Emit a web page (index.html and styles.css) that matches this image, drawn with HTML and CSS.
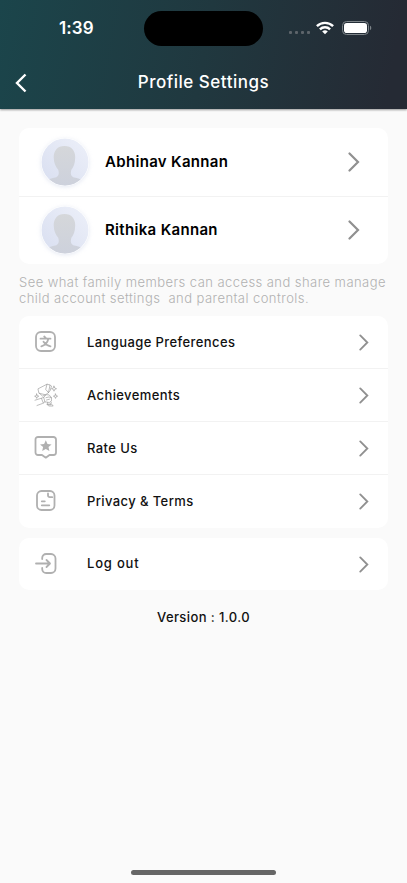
FILE: index.html
```html
<!DOCTYPE html>
<html lang="en">
<head>
    <meta charset="UTF-8">
    <meta name="viewport" content="width=device-width, initial-scale=1.0">
    <title>Profile Settings</title>
    <link rel="stylesheet" href="styles.css">
</head>
<body>
    <svg width="0" height="0" class="defs">
        <defs>
            <linearGradient id="avatar-bg" x1="1" y1="0" x2="0" y2="1">
                <stop offset="0" stop-color="#edf0f9"/>
                <stop offset="1" stop-color="#d8def0"/>
            </linearGradient>
            <linearGradient id="avatar-fg" x1="0" y1="0" x2="0" y2="1">
                <stop offset="0" stop-color="#d5d7da"/>
                <stop offset="1" stop-color="#cdd1dc"/>
            </linearGradient>
            <clipPath id="avatar-clip"><circle cx="24" cy="24" r="23.5"/></clipPath>
        </defs>
        <symbol id="avatar" viewBox="0 0 48 48">
            <g clip-path="url(#avatar-clip)">
                <rect width="48" height="48" fill="url(#avatar-bg)"/>
                <path d="M23.500 8c-7 0-11 4.800-10.800 11.500.1 5.600 2.200 9.600 4.500 12.200 1.300 4.300.3 7-2.900 7.800-3.300.8-6.500 1.600-8.500 3V48h36v-5.500c-2-1.400-5.200-2.200-8.500-3-3.200-.8-4.200-3.500-2.900-7.800 2.300-2.600 3.700-6.600 3.800-12.200C34.400 12.800 30.500 8 23.500 8z" fill="url(#avatar-fg)"/>
            </g>
        </symbol>
        <symbol id="chevron" viewBox="0 0 12 20">
            <path d="M1.500 1.500 10 10l-8.500 8.500" fill="none" stroke="currentColor" stroke-width="2.200" stroke-linecap="round"/>
        </symbol>
    </svg>

    <header class="header">
        <div class="status-bar">
            <span class="time">1:39</span>
            <div class="island"></div>
            <div class="status-icons">
                <div class="dots"><i></i><i></i><i></i><i></i></div>
                <svg class="wifi" viewBox="0 0 18 14" fill="none" stroke="#fff" stroke-width="2.400">
                    <path d="M.9 5.200a11.600 11.600 0 0 1 16.200 0"/>
                    <path d="M3.900 8.300a7.300 7.300 0 0 1 10.200 0"/>
                    <path d="M9 13.300 6.200 10.500a4 4 0 0 1 5.600 0z" fill="#fff" stroke="none"/>
                </svg>
                <svg class="battery" viewBox="0 0 30 14">
                    <rect x=".5" y=".5" width="26" height="13" rx="4" fill="none" stroke="#7d8489"/>
                    <rect x="2" y="2" width="23" height="10" rx="2.800" fill="#fff"/>
                    <path d="M28 4.800c1.700.6 1.700 3.800 0 4.400z" fill="#7d8489"/>
                </svg>
            </div>
        </div>
        <div class="title-bar">
            <svg class="back" viewBox="0 0 12 20"><path d="M10.500 1.500 2 10l8.500 8.500" fill="none" stroke="#fff" stroke-width="2.400"/></svg>
            <h1>Profile Settings</h1>
        </div>
    </header>

    <main class="content">
        <div class="card members">
            <div class="member">
                <svg class="avatar"><use href="#avatar"/></svg>
                <span class="name">Abhinav Kannan</span>
                <svg class="chevron"><use href="#chevron"/></svg>
            </div>
            <div class="member">
                <svg class="avatar"><use href="#avatar"/></svg>
                <span class="name">Rithika Kannan</span>
                <svg class="chevron"><use href="#chevron"/></svg>
            </div>
        </div>

        <p class="hint">See what family members can access and share manage<br>child account settings&nbsp; and parental controls.</p>

        <div class="card">
            <div class="item">
                <svg class="icon" viewBox="0 0 24 24">
                    <rect x="2" y="2" width="19" height="19" rx="5"/>
                    <path d="M6.500 8.700h10M10.200 6.500l2 1.800M14.300 9c-.8 3.500-3.300 6.300-7 7.300M9.500 11.800c1.700 2.400 4 4 7 4.500"/>
                </svg>
                <span class="label">Language Preferences</span>
                <svg class="chevron"><use href="#chevron"/></svg>
            </div>
            <div class="item">
                <svg class="icon fine" viewBox="0 0 24 24">
                    <path d="M4.300 5.700 13 1.200l3 .8-1.500 7.600-3 2.200-6.200-1.500zM13 1.200l-1.300 5.200 2.800 3.200M16 2l1.500 1-1.300 4.500-1.700 2.100M5.300 10.300l3.300 2.800 3-1.300"/>
                    <path d="M1 17.200l8.700-2.700 2.100-2.800 3.300.2 2.200 2.400.2 3.500-2.200 1.700-4.400-.7-2.200 1.600L3 22.500M9.700 14.500l1.300 4.500M12 14.700l3-.8 2.500 1M12.500 17l3-.8"/>
                    <path d="M7.500 15.500l1.800 4.500M13.500 19.500l-.3 2 3.300.4.800-2.700M13.200 21.500l1.500 1.500h4.500l-1.500-1.700z"/>
                    <path d="m20 3.200.7 1.800 1.800.7-1.800.7-.7 1.800-.7-1.800-1.800-.7 1.800-.7zM21.500 11l.6 1.600 1.500.6-1.500.6-.6 1.600-.6-1.600-1.500-.6 1.500-.6zM2.700 11l.6 1.600 1.500.6-1.500.6-.6 1.600-.6-1.600-1.500-.6 1.500-.6z"/>
                </svg>
                <span class="label">Achievements</span>
                <svg class="chevron"><use href="#chevron"/></svg>
            </div>
            <div class="item">
                <svg class="icon" viewBox="0 0 24 24">
                    <path d="M4 1h15.500a2.500 2.500 0 0 1 2.500 2.500v13a2.500 2.500 0 0 1-2.500 2.500h-4l-3.700 2.700L8 19H4a2.500 2.500 0 0 1-2.500-2.500v-13A2.500 2.500 0 0 1 4 1z"/>
                    <path class="solid" d="m11.800 4.200 1.700 3.800 4.100.4-3.100 2.700.9 4-3.600-2.100-3.600 2.100.9-4L6 8.400l4.100-.4z"/>
                </svg>
                <span class="label">Rate Us</span>
                <svg class="chevron"><use href="#chevron"/></svg>
            </div>
            <div class="item">
                <svg class="icon" viewBox="0 0 24 24">
                    <rect x="3" y="2" width="17.500" height="19" rx="4.500"/>
                    <path d="M14 4.500v2A1.700 1.700 0 0 0 15.700 8.200h2.500M7.800 12.300h3M7.800 16.300h7.500"/>
                </svg>
                <span class="label">Privacy &amp; Terms</span>
                <svg class="chevron"><use href="#chevron"/></svg>
            </div>
        </div>

        <div class="card">
            <div class="item">
                <svg class="icon" viewBox="0 0 24 24">
                    <path d="M8.200 7V6a4 4 0 0 1 4-4H17a4.500 4.500 0 0 1 4.500 4.500v10A4.500 4.500 0 0 1 17 21h-4.800a4 4 0 0 1-4-4v-1M2 11.500h13.500M12.500 8l3.500 3.500-3.500 3.500"/>
                </svg>
                <span class="label logout">Log out</span>
                <svg class="chevron"><use href="#chevron"/></svg>
            </div>
        </div>

        <p class="version">Version : 1.0.0</p>
    </main>

    <div class="home-indicator"></div>
</body>
</html>
```
FILE: styles.css
```css
* {
    box-sizing: border-box;
}

body {
    margin: 0;
    height: 883px;
    display: flex;
    flex-direction: column;
    overflow: hidden;
    background-color: #fafafa;
    font-family: Inter, "Liberation Sans", sans-serif;
    color: #111;
}

.defs {
    position: absolute;
}

.header {
    height: 109px;
    flex: none;
    background: linear-gradient(100deg, #1b454b 0%, #20383f 50%, #252a34 95%);
    box-shadow: 0 1px 2px rgba(0, 0, 0, 0.4);
    color: #fff;
}

.status-bar {
    height: 56px;
    display: grid;
    grid-template-columns: 144px 119px 1fr;
    align-items: center;
}

.time {
    padding-left: 59px;
    font-size: 17px;
    font-weight: 600;
    letter-spacing: 0.1px;
}

.island {
    height: 35px;
    border-radius: 18px;
    background-color: #000;
}

.status-icons {
    display: flex;
    align-items: center;
    padding-left: 26px;
}

.dots {
    display: flex;
    gap: 3px;
    padding-top: 9px;
    margin-right: 6px;
}

.dots i {
    width: 3px;
    height: 3px;
    border-radius: 1px;
    background-color: #5d646a;
}

.wifi {
    width: 18px;
    height: 14px;
    margin-right: 8px;
}

.battery {
    width: 30px;
    height: 14px;
}

.title-bar {
    height: 53px;
    display: grid;
    grid-template-columns: 15px 12px 1fr 27px;
    align-items: center;
}

.back {
    grid-column: 2;
    width: 12px;
    height: 20px;
}

h1 {
    margin: 0;
    padding-bottom: 1px;
    text-align: center;
    font-size: 17px;
    font-weight: 500;
    letter-spacing: 0.5px;
}

.content {
    flex: 1;
    padding: 19px 19px 0;
}

.card {
    margin-bottom: 10px;
    border-radius: 10px;
    background-color: #fff;
}

.member {
    height: 68px;
    display: flex;
    align-items: center;
    padding: 0 28px 0 22px;
}

.member + .member,
.item + .item {
    border-top: 1px solid #f2f2f2;
}

.member + .member {
    padding-bottom: 1px;
}

.avatar {
    width: 48px;
    height: 48px;
    margin-right: 16px;
    border-radius: 50%;
    box-shadow: 0 1px 4px rgba(190, 200, 225, 0.4);
}

.name {
    flex: 1;
    padding-bottom: 2px;
    font-size: 15px;
    font-weight: 600;
    letter-spacing: 0.32px;
    color: #000;
}

.chevron {
    width: 12px;
    height: 20px;
    color: #909090;
}

.hint {
    margin: 0 0 10px;
    font-size: 13px;
    font-weight: 300;
    line-height: 16px;
    letter-spacing: 0.44px;
    white-space: nowrap;
    color: #b1b1b1;
}

.item {
    height: 53px;
    display: flex;
    align-items: center;
    padding: 0 19px 0 15px;
}

.item:first-child {
    height: 52px;
}

.item:last-child:not(:first-child) {
    height: 54px;
    padding-bottom: 1px;
}

.icon {
    width: 24px;
    height: 24px;
    margin-right: 29px;
    fill: none;
    stroke: #b0b0b0;
    stroke-width: 1.8;
    stroke-linecap: round;
    stroke-linejoin: round;
}

.icon.fine {
    stroke: #999;
    stroke-width: 0.65;
}

.icon .solid {
    fill: #b0b0b0;
    stroke: none;
}

.label {
    flex: 1;
    padding-bottom: 1px;
    font-size: 13px;
    font-weight: 500;
    letter-spacing: 0.4px;
}

.logout {
    padding-bottom: 2px;
    letter-spacing: 0.8px;
}

.item .chevron {
    width: 10px;
    height: 17px;
}

.version {
    margin: 0;
    padding-top: 8px;
    text-align: center;
    font-size: 13px;
    font-weight: 500;
    line-height: 18px;
    letter-spacing: 0.4px;
}

.home-indicator {
    flex: none;
    width: 145px;
    height: 5px;
    margin: 0 auto 8px;
    border-radius: 3px;
    background-color: #666;
}
```
